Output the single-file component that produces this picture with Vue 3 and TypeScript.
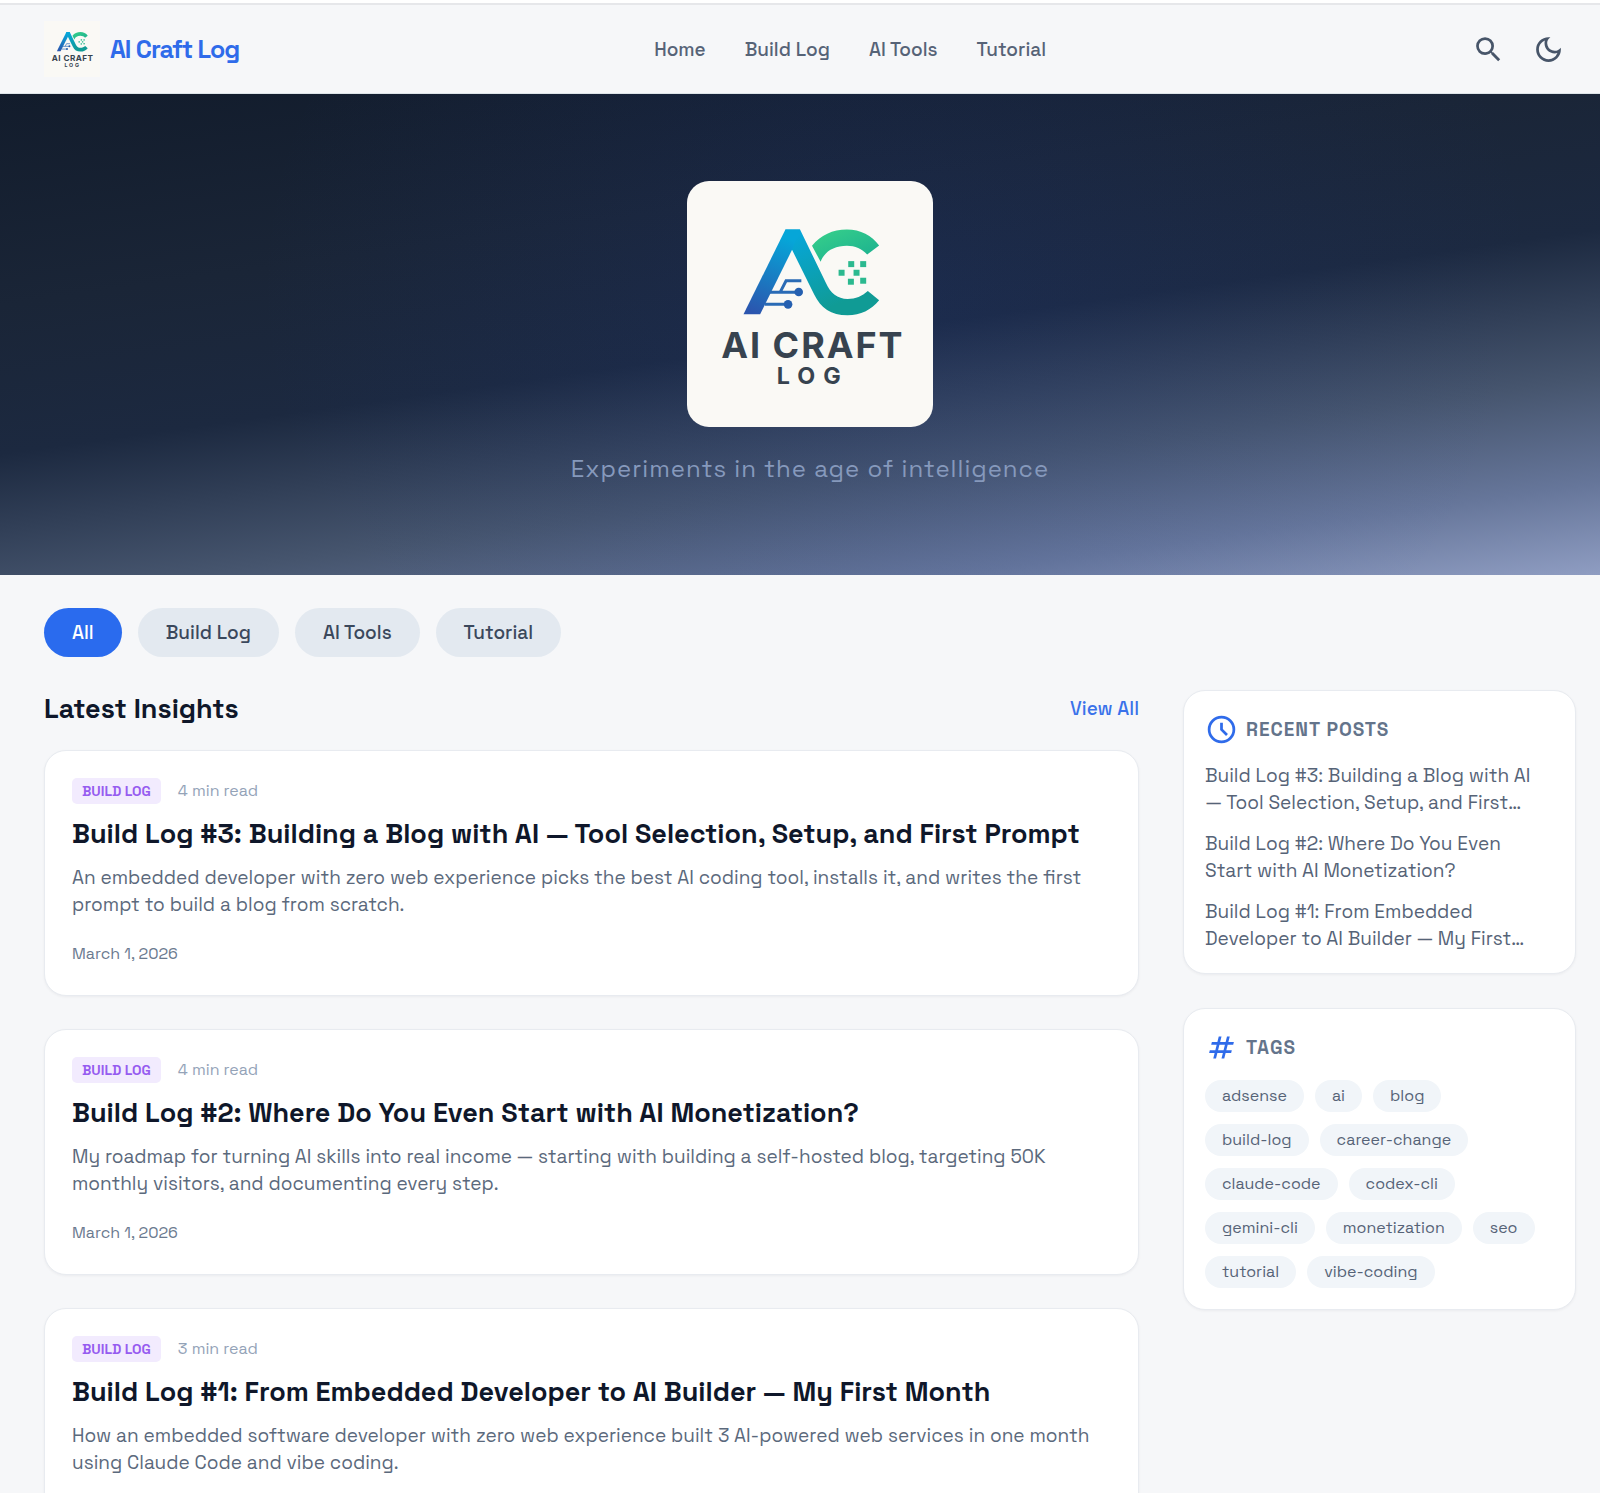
<script setup lang="ts">
import { ref } from 'vue'

interface Post {
  id: number
  title: string
  shortTitle: string
  category: string
  minutes: number
  summary: string
  date: string
}

const categories: string[] = ['All', 'Build Log', 'AI Tools', 'Tutorial']
const navItems: string[] = ['Home', 'Build Log', 'AI Tools', 'Tutorial']
const active = ref('All')

const posts: Post[] = [
  {
    id: 3,
    title: 'Build Log #3: Building a Blog with AI — Tool Selection, Setup, and First Prompt',
    shortTitle: 'Build Log #3: Building a Blog with AI — Tool Selection, Setup, and First…',
    category: 'Build Log',
    minutes: 4,
    summary:
      'An embedded developer with zero web experience picks the best AI coding tool, installs it, and writes the first prompt to build a blog from scratch.',
    date: 'March 1, 2026',
  },
  {
    id: 2,
    title: 'Build Log #2: Where Do You Even Start with AI Monetization?',
    shortTitle: 'Build Log #2: Where Do You Even Start with AI Monetization?',
    category: 'Build Log',
    minutes: 4,
    summary:
      'My roadmap for turning AI skills into real income — starting with building a self-hosted blog, targeting 50K monthly visitors, and documenting every step.',
    date: 'March 1, 2026',
  },
  {
    id: 1,
    title: 'Build Log #1: From Embedded Developer to AI Builder — My First Month',
    shortTitle: 'Build Log #1: From Embedded Developer to AI Builder — My First…',
    category: 'Build Log',
    minutes: 3,
    summary:
      'How an embedded software developer with zero web experience built 3 AI-powered web services in one month using Claude Code and vibe coding.',
    date: 'March 1, 2026',
  },
]

const tags: string[] = [
  'adsense', 'ai', 'blog', 'build-log', 'career-change', 'claude-code',
  'codex-cli', 'gemini-cli', 'monetization', 'seo', 'tutorial', 'vibe-coding',
]
</script>

<template>
  <div class="page">
    <svg class="defs" aria-hidden="true">
      <defs>
        <linearGradient id="legLeft" gradientUnits="userSpaceOnUse" x1="330" y1="179" x2="230" y2="434">
          <stop offset="0.1" stop-color="#06a6d8" />
          <stop offset="1" stop-color="#2b55ae" />
        </linearGradient>
        <linearGradient id="legRight" gradientUnits="userSpaceOnUse" x1="340" y1="190" x2="440" y2="420">
          <stop offset="0.05" stop-color="#06a6d8" />
          <stop offset="1" stop-color="#109b95" />
        </linearGradient>
        <linearGradient id="arcTop" gradientUnits="userSpaceOnUse" x1="470" y1="179" x2="510" y2="276">
          <stop offset="0" stop-color="#33cb8b" />
          <stop offset="1" stop-color="#1fb58f" />
        </linearGradient>
        <symbol id="brand" viewBox="22 33 740 740">
          <rect x="22" y="33" width="740" height="740" fill="#faf9f5" />
          <path
            fill="url(#legRight)"
            d="M318 179H362L440 340C453 370 475 388 505 388C530 388 548 380 566 364L600 392C575 422 545 437 505 437C455 437 424 414 405 375L338 240Z"
          />
          <path fill="url(#legLeft)" d="M192 434L318 179H362L338 240L242 434Z" />
          <path
            fill="url(#arcTop)"
            d="M398 228C424 196 460 179 503 179C544 179 578 197 600 227L564 254C548 237 528 228 503 228C464 228 435 246 424 276Z"
          />
          <g fill="none" stroke="#2a6bb5" stroke-width="9">
            <path d="M270 368H358M256 404H326M302 368L320 333H366" />
          </g>
          <g fill="#2560b0">
            <circle cx="358" cy="367" r="13" />
            <circle cx="326" cy="404" r="13" />
          </g>
          <g fill="#2bb98f">
            <rect x="507" y="274" width="18" height="18" />
            <rect x="543" y="274" width="18" height="18" />
            <rect x="478" y="300" width="18" height="18" />
            <rect x="523" y="300" width="18" height="18" />
            <rect x="506" y="327" width="18" height="18" />
            <rect x="543" y="324" width="18" height="18" />
          </g>
          <text class="mark-text" x="125" y="564" font-size="108" letter-spacing="6">AI CRAFT</text>
          <text class="mark-text" x="292" y="643" font-size="70" letter-spacing="24">LOG</text>
        </symbol>
      </defs>
    </svg>

    <div class="top-strip"></div>

    <header class="header">
      <a class="brand" href="#">
        <svg class="brand-logo" aria-hidden="true"><use href="#brand" /></svg>
        <span>AI Craft Log</span>
      </a>
      <nav class="nav">
        <a v-for="item in navItems" :key="item" href="#">{{ item }}</a>
      </nav>
      <div class="actions">
        <button type="button" aria-label="Search">
          <svg viewBox="0 0 24 24"><path d="M15.5 14h-.79l-.28-.27A6.471 6.471 0 0 0 16 9.5 6.5 6.5 0 1 0 9.5 16c1.61 0 3.09-.59 4.23-1.57l.27.28v.79l5 4.99L20.49 19l-4.99-5zm-6 0C7.01 14 5 11.99 5 9.5S7.01 5 9.5 5 14 7.01 14 9.5 11.99 14 9.5 14z" /></svg>
        </button>
        <button type="button" aria-label="Toggle dark mode">
          <svg viewBox="0 0 24 24"><path d="M9.37 5.51A7.35 7.35 0 0 0 9.1 7.5c0 4.08 3.32 7.4 7.4 7.4.68 0 1.35-.09 1.99-.27A7.014 7.014 0 0 1 12 19c-3.86 0-7-3.14-7-7 0-2.93 1.81-5.45 4.37-6.49zM12 3a9 9 0 1 0 9 9c0-.46-.04-.92-.1-1.36a5.389 5.389 0 0 1-4.4 2.26 5.403 5.403 0 0 1-3.14-9.8c-.44-.06-.9-.1-1.36-.1z" /></svg>
        </button>
      </div>
    </header>

    <section class="hero">
      <svg class="hero-logo" role="img" aria-label="AI Craft Log"><use href="#brand" /></svg>
      <p>Experiments in the age of intelligence</p>
    </section>

    <main class="content">
      <div class="filters">
        <button
          v-for="category in categories"
          :key="category"
          type="button"
          :class="{ active: active === category }"
          @click="active = category"
        >
          {{ category }}
        </button>
      </div>

      <div class="columns">
        <section class="feed">
          <div class="feed-head">
            <h2>Latest Insights</h2>
            <a href="#">View All</a>
          </div>
          <div class="posts">
            <article v-for="post in posts" :key="post.id" class="card post">
              <div class="meta">
                <span class="badge">{{ post.category }}</span>
                <span class="minutes">{{ post.minutes }} min read</span>
              </div>
              <h3>{{ post.title }}</h3>
              <p>{{ post.summary }}</p>
              <time>{{ post.date }}</time>
            </article>
          </div>
        </section>

        <aside class="sidebar">
          <section class="card panel">
            <h4>
              <svg viewBox="0 0 24 24" aria-hidden="true"><path fill-rule="evenodd" d="M12 2a10 10 0 1 0 0 20 10 10 0 0 0 0-20zm0 2a8 8 0 1 1 0 16 8 8 0 0 1 0-16z" /><path d="M13 7h-2v5.4l4.3 4.3 1.4-1.4-3.7-3.7z" /></svg>
              Recent Posts
            </h4>
            <ul class="recent">
              <li v-for="post in posts" :key="post.id"><a href="#">{{ post.shortTitle }}</a></li>
            </ul>
          </section>
          <section class="card panel">
            <h4>
              <svg viewBox="0 -960 960 960" aria-hidden="true"><path d="m240-160 40-160H120l20-80h160l40-160H180l20-80h160l40-160h80l-40 160h160l40-160h80l-40 160h160l-20 80H660l-40 160h160l-20 80H600l-40 160h-80l40-160H360l-40 160h-80Zm140-240h160l40-160H420l-40 160Z" /></svg>
              Tags
            </h4>
            <div class="tags">
              <a v-for="tag in tags" :key="tag" href="#">{{ tag }}</a>
            </div>
          </section>
        </aside>
      </div>
    </main>
  </div>
</template>

<style>
body {
  margin: 0;
  background: #f6f7f9;
}
</style>

<style scoped>
.page {
  font-family: 'Space Grotesk', Inter, sans-serif;
  color: #0f172a;
  background: #f6f7f9;
}
.page * {
  box-sizing: border-box;
}
a {
  color: inherit;
  text-decoration: none;
}
button {
  font: inherit;
  border: 0;
  cursor: pointer;
}
h2, h3, h4, p, ul {
  margin: 0;
  padding: 0;
}
.defs {
  position: absolute;
  width: 0;
  height: 0;
}
.mark-text {
  font-family: Inter, sans-serif;
  font-weight: 700;
  fill: #37434f;
}

.top-strip {
  height: 5px;
  background: #fff;
  border-bottom: 2px solid #e6e7ea;
}
.header {
  display: flex;
  align-items: center;
  justify-content: space-between;
  padding: 16px 24px 16px 44px;
  border-bottom: 1px solid #dde4e8;
}
.brand {
  display: flex;
  align-items: center;
  gap: 10px;
  font-size: 25px;
  line-height: 32px;
  font-weight: 700;
  letter-spacing: -1px;
  color: #2f6bea;
}
.brand-logo {
  width: 56px;
  height: 56px;
}
.nav {
  display: flex;
  gap: 39px;
  font-size: 19px;
  line-height: 29px;
  font-weight: 500;
  color: #566377;
}
.actions {
  display: flex;
  gap: 5px;
}
.actions button {
  display: flex;
  padding: 11px;
  background: none;
}
.actions svg {
  width: 33px;
  height: 33px;
  fill: #475569;
}

.hero {
  display: flex;
  flex-direction: column;
  align-items: center;
  gap: 24px;
  padding: 87px 24px 89px 44px;
  background:
    radial-gradient(ellipse 40% 110% at 56% 40%, rgba(30, 64, 175, 0.13), rgba(30, 64, 175, 0) 100%),
    linear-gradient(172deg, #121c2c 0%, #1a2537 30%, #1c2940 51%, #46556e 72%, #66769a 87%, #8f9dc2 100%);
}
.hero-logo {
  width: 246px;
  height: 246px;
  border-radius: 22px;
}
.hero p {
  font-size: 24px;
  line-height: 35px;
  letter-spacing: 1px;
  color: #8699bc;
}

.content {
  padding: 33px 24px 44px 44px;
}
.filters {
  display: flex;
  gap: 16px;
  margin-bottom: 33px;
}
.filters button {
  padding: 10px 28px;
  border-radius: 25px;
  font-size: 19px;
  line-height: 29px;
  font-weight: 500;
  color: #3b485c;
  background: #e3e9f0;
}
.filters .active {
  color: #fff;
  background: #2a6bee;
}
.columns {
  display: grid;
  grid-template-columns: minmax(0, 1fr) 393px;
  gap: 44px;
  align-items: start;
}
.posts {
  display: flex;
  flex-direction: column;
  gap: 33px;
}
.feed-head {
  display: flex;
  align-items: center;
  justify-content: space-between;
  margin-bottom: 22px;
}
.feed-head h2 {
  font-size: 27px;
  line-height: 38px;
  font-weight: 700;
}
.feed-head a {
  font-size: 19px;
  line-height: 28px;
  font-weight: 500;
  color: #3a72ea;
}
.card {
  background: #fff;
  border: 1px solid #e8ebf0;
  border-radius: 22px;
  box-shadow: 0 1px 3px rgba(15, 23, 42, 0.05);
}
.post {
  display: flex;
  flex-direction: column;
  align-items: flex-start;
  padding: 27px 27px 30px;
}
.meta {
  display: flex;
  align-items: center;
  gap: 17px;
}
.badge {
  padding: 3px 10px;
  border-radius: 5px;
  font-size: 14px;
  line-height: 20px;
  font-weight: 700;
  text-transform: uppercase;
  color: #965cf0;
  background: #f2ebfe;
}
.minutes,
.post time {
  font-size: 16px;
  line-height: 22px;
  color: #94a3b8;
}
.post h3 {
  margin: 12px 0;
  font-size: 27px;
  line-height: 36px;
  font-weight: 700;
}
.post p {
  font-size: 19px;
  line-height: 27px;
  color: #5b697c;
}
.post time {
  margin-top: 25px;
  color: #6b7a8f;
}

.sidebar {
  display: flex;
  flex-direction: column;
  gap: 34px;
}
.panel {
  padding: 22px 30px 21px 21px;
}
.panel h4 {
  display: flex;
  align-items: center;
  gap: 8px;
  margin-bottom: 16px;
  font-size: 19px;
  line-height: 28px;
  font-weight: 700;
  letter-spacing: 1px;
  text-transform: uppercase;
  color: #64748b;
}
.panel h4 svg {
  width: 33px;
  height: 33px;
  fill: #2f6bea;
}
.recent {
  display: flex;
  flex-direction: column;
  gap: 14px;
  list-style: none;
}
.recent a {
  display: block;
  font-size: 19px;
  line-height: 27px;
  color: #566377;
}
.tags {
  display: flex;
  flex-wrap: wrap;
  gap: 12px 11px;
}
.tags a {
  padding: 5px 17px;
  border-radius: 16px;
  font-size: 16px;
  line-height: 22px;
  color: #566377;
  background: #f1f5f9;
}
</style>
